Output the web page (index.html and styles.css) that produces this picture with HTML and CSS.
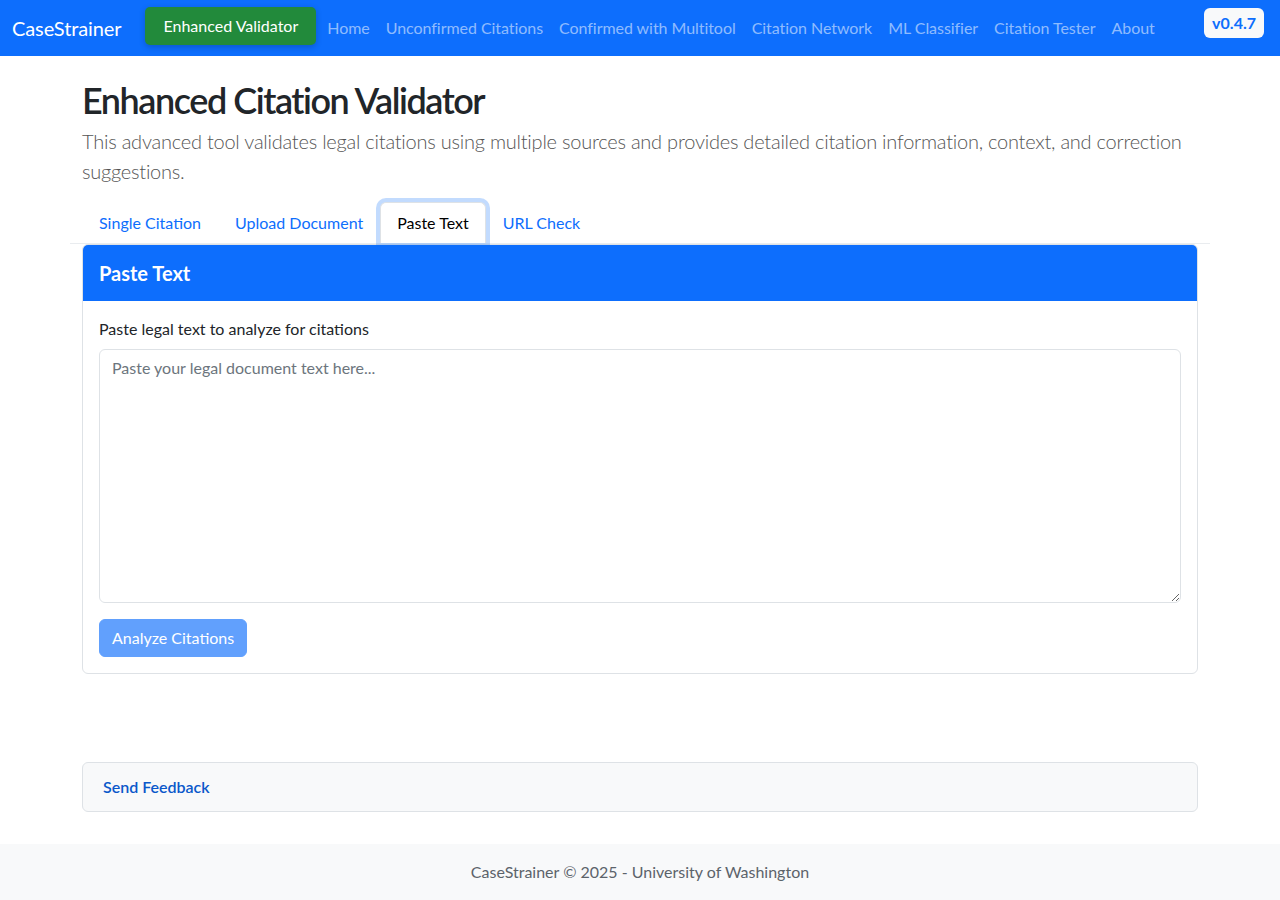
FILE: index.html
```html
<!DOCTYPE html>
<html lang="en">
<head>
<meta charset="utf-8">
<title>CaseStrainer - Enhanced Citation Validator</title>
<link rel="stylesheet" href="styles.css">
</head>
<body>
<nav class="navbar">
  <a class="brand" href="#">CaseStrainer</a>
  <a class="btn-validator" href="#">Enhanced Validator</a>
  <ul class="nav-links">
    <li><a href="#">Home</a></li>
    <li><a href="#">Unconfirmed Citations</a></li>
    <li><a href="#">Confirmed with Multitool</a></li>
    <li><a href="#">Citation Network</a></li>
    <li><a href="#">ML Classifier</a></li>
    <li><a href="#">Citation Tester</a></li>
    <li><a href="#">About</a></li>
  </ul>
  <span class="version">v0.4.7</span>
</nav>

<main class="container">
  <h1 class="title">Enhanced Citation Validator</h1>
  <p class="lead">This advanced tool validates legal citations using multiple sources and provides detailed citation information, context, and correction suggestions.</p>

  <ul class="tabs">
    <li><a class="tab" href="#">Single Citation</a></li>
    <li><a class="tab" href="#">Upload Document</a></li>
    <li><a class="tab active" href="#">Paste Text</a></li>
    <li><a class="tab" href="#">URL Check</a></li>
  </ul>

  <section class="card">
    <div class="card-header">
      <h5>Paste Text</h5>
    </div>
    <div class="card-body">
      <label class="form-label" for="text">Paste legal text to analyze for citations</label>
      <textarea id="text" class="form-control" rows="10" placeholder="Paste your legal document text here..."></textarea>
      <button class="btn-analyze" disabled>Analyze Citations</button>
    </div>
  </section>

  <section class="feedback">
    <a href="#">Send Feedback</a>
  </section>
</main>

<footer class="footer">
  CaseStrainer &copy; 2025 - University of Washington
</footer>
</body>
</html>
```

FILE: styles.css
```css
* { box-sizing: border-box; }

html, body {
  margin: 0;
  padding: 0;
}

body {
  font-family: Lato, "Noto Sans", "Liberation Sans", sans-serif;
  font-size: 16px;
  line-height: 1.5;
  color: #212529;
  background: #fff;
}

a { text-decoration: none; }

.navbar {
  height: 56px;
  background: #0d6efd;
  display: flex;
  align-items: center;
  padding: 0 16px 0 12px;
}

.brand {
  color: #fff;
  font-size: 20px;
  line-height: 30px;
  letter-spacing: -0.1px;
}

.btn-validator {
  margin-left: 24px;
  background: #228a3b;
  color: #fff;
  padding: 7px 18px;
  line-height: 24px;
  border-radius: 5px;
  box-shadow: 0 2px 6px rgba(0, 0, 0, 0.2);
  margin-bottom: 5px;
}

.nav-links {
  list-style: none;
  display: flex;
  margin: 0 0 0 3px;
  padding: 0;
}

.nav-links a {
  display: block;
  padding: 8px;
  color: rgba(255, 255, 255, 0.55);
  letter-spacing: -0.05px;
}

.version {
  margin-left: auto;
  margin-bottom: 10px;
  background: #f8f9fa;
  color: #0d6efd;
  font-weight: 700;
  padding: 3px 8px;
  border-radius: 6px;
  line-height: 24px;
}

.container {
  width: 1140px;
  margin: 0 auto;
  padding: 20px 12px 0;
}

.title {
  font-size: 36px;
  font-weight: 600;
  line-height: 48px;
  letter-spacing: -1.45px;
  margin: 0 0 2px;
}

.lead {
  font-size: 20px;
  font-weight: 300;
  line-height: 30px;
  letter-spacing: -0.23px;
  color: #555;
  margin: 0 0 16px;
}

.tabs {
  list-style: none;
  display: flex;
  margin: 0 -12px;
  padding: 0 12px;
  border-bottom: 1px solid #e9ecef;
}

.tab {
  display: block;
  padding: 8px 16px;
  line-height: 24px;
  color: #0d6efd;
  border: 1px solid transparent;
  border-bottom: 0;
  border-radius: 6px 6px 0 0;
}

.tab.active {
  color: #000;
  background: #fff;
  border-color: #dee2e6;
  box-shadow: 0 0 0 4px rgba(13, 110, 253, 0.25);
}

.card {
  border: 1px solid #dee2e6;
  border-radius: 6px;
  overflow: hidden;
}

.card-header {
  background: #0d6efd;
  color: #fff;
  padding: 16px;
}

.card-header h5 {
  margin: 0;
  font-size: 20px;
  font-weight: 700;
  line-height: 24px;
}

.card-body {
  padding: 16px;
  display: flex;
  flex-direction: column;
  align-items: flex-start;
}

.form-label {
  margin-bottom: 8px;
}

.form-control {
  width: 100%;
  height: 254px;
  font: inherit;
  color: #212529;
  padding: 6px 12px;
  border: 1px solid #dee2e6;
  border-radius: 6px;
  resize: vertical;
}

.form-control::placeholder {
  color: #6c757d;
}

.btn-analyze {
  margin-top: 16px;
  font: inherit;
  line-height: 24px;
  color: #fff;
  background: #0d6efd;
  opacity: 0.65;
  border: 1px solid #0d6efd;
  border-radius: 6px;
  padding: 6px 12px;
}

.feedback {
  margin-top: 88px;
  background: #f8f9fa;
  border: 1px solid #dee2e6;
  border-radius: 6px;
  padding: 12px 20px;
}

.feedback a {
  color: #0a58ca;
  font-weight: 600;
  line-height: 24px;
}

.footer {
  margin-top: 32px;
  background: #f8f9fa;
  color: #5c636a;
  text-align: center;
  padding: 16px;
  line-height: 24px;
}
```
